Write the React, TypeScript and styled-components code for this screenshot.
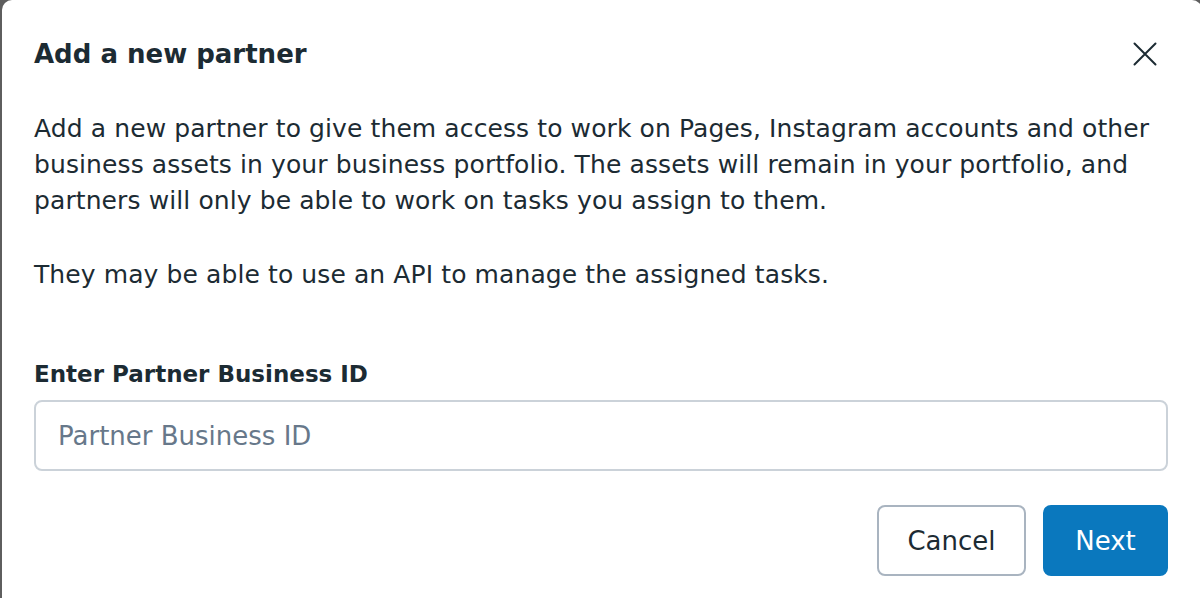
import React from 'react';
import styled, { createGlobalStyle } from 'styled-components';

const Global = createGlobalStyle`
  html, body {
    margin: 0;
    padding: 0;
    background: #5e5e5e;
    overflow: hidden;
  }
  body {
    font-family: "DejaVu Sans", Inter, sans-serif;
    color: #1c2b33;
  }
`;

const Dialog = styled.div`
  margin-left: 2px;
  width: 1200px;
  height: 620px;
  box-sizing: border-box;
  background: #fff;
  border-radius: 10px;
  padding: 34px 32px 0 32px;
  display: flex;
  flex-direction: column;
`;

const Header = styled.div`
  display: flex;
  justify-content: space-between;
  align-items: center;
  height: 40px;
`;

const Title = styled.h2`
  margin: 0;
  font-size: 26px;
  font-weight: 700;
`;

const CloseButton = styled.button`
  border: none;
  background: none;
  padding: 0;
  margin-right: 11px;
  width: 28px;
  height: 28px;
  display: flex;
  align-items: center;
  justify-content: center;
  cursor: pointer;
  color: #1c2b33;
`;

const Text = styled.p<{ $gap?: number }>`
  margin: ${p => p.$gap ?? 0}px 0 0 0;
  font-size: 25px;
  letter-spacing: 0.1px;
  line-height: 36px;
  font-weight: 400;
  white-space: nowrap;
`;

const Label = styled.label`
  display: block;
  margin-top: 63px;
  font-size: 23px;
  line-height: 36px;
  font-weight: 700;
`;

const Input = styled.input`
  margin-top: 8px;
  width: 1134px;
  height: 71px;
  box-sizing: border-box;
  border: 2px solid #cbd2d9;
  border-radius: 8px;
  padding: 0 22px;
  font-family: inherit;
  font-size: 26px;
  color: #1c2b33;
  outline: none;
  &::placeholder {
    color: #67788a;
  }
`;

const Footer = styled.div`
  display: flex;
  justify-content: flex-end;
  gap: 17px;
  margin-top: 34px;
  width: 1134px;
`;

const Button = styled.button<{ $primary?: boolean }>`
  height: 71px;
  width: ${p => (p.$primary ? 125 : 149)}px;
  padding: 0;
  border-radius: 8px;
  font-family: inherit;
  font-size: 26px;
  font-weight: 500;
  cursor: pointer;
  border: 2px solid ${p => (p.$primary ? '#0a78be' : '#a9b4c0')};
  background: ${p => (p.$primary ? '#0a78be' : '#fff')};
  color: ${p => (p.$primary ? '#fff' : '#1c2b33')};
`;

export default function App() {
  return (
    <>
      <Global />
      <Dialog>
        <Header>
          <Title>Add a new partner</Title>
          <CloseButton aria-label="Close">
            <svg width="24" height="24" viewBox="0 0 24 24" fill="none" stroke="currentColor" strokeWidth="2" strokeLinecap="round">
              <path d="M1.5 1.5l21 21M22.5 1.5l-21 21" />
            </svg>
          </CloseButton>
        </Header>
        <Text $gap={37}>
          Add a new partner to give them access to work on Pages, Instagram accounts and other
          <br />
          business assets in your business portfolio. The assets will remain in your portfolio, and
          <br />
          partners will only be able to work on tasks you assign to them.
        </Text>
        <Text $gap={38}>They may be able to use an API to manage the assigned tasks.</Text>
        <Label htmlFor="pid">Enter Partner Business ID</Label>
        <Input id="pid" placeholder="Partner Business ID" />
        <Footer>
          <Button>Cancel</Button>
          <Button $primary>Next</Button>
        </Footer>
      </Dialog>
    </>
  );
}
